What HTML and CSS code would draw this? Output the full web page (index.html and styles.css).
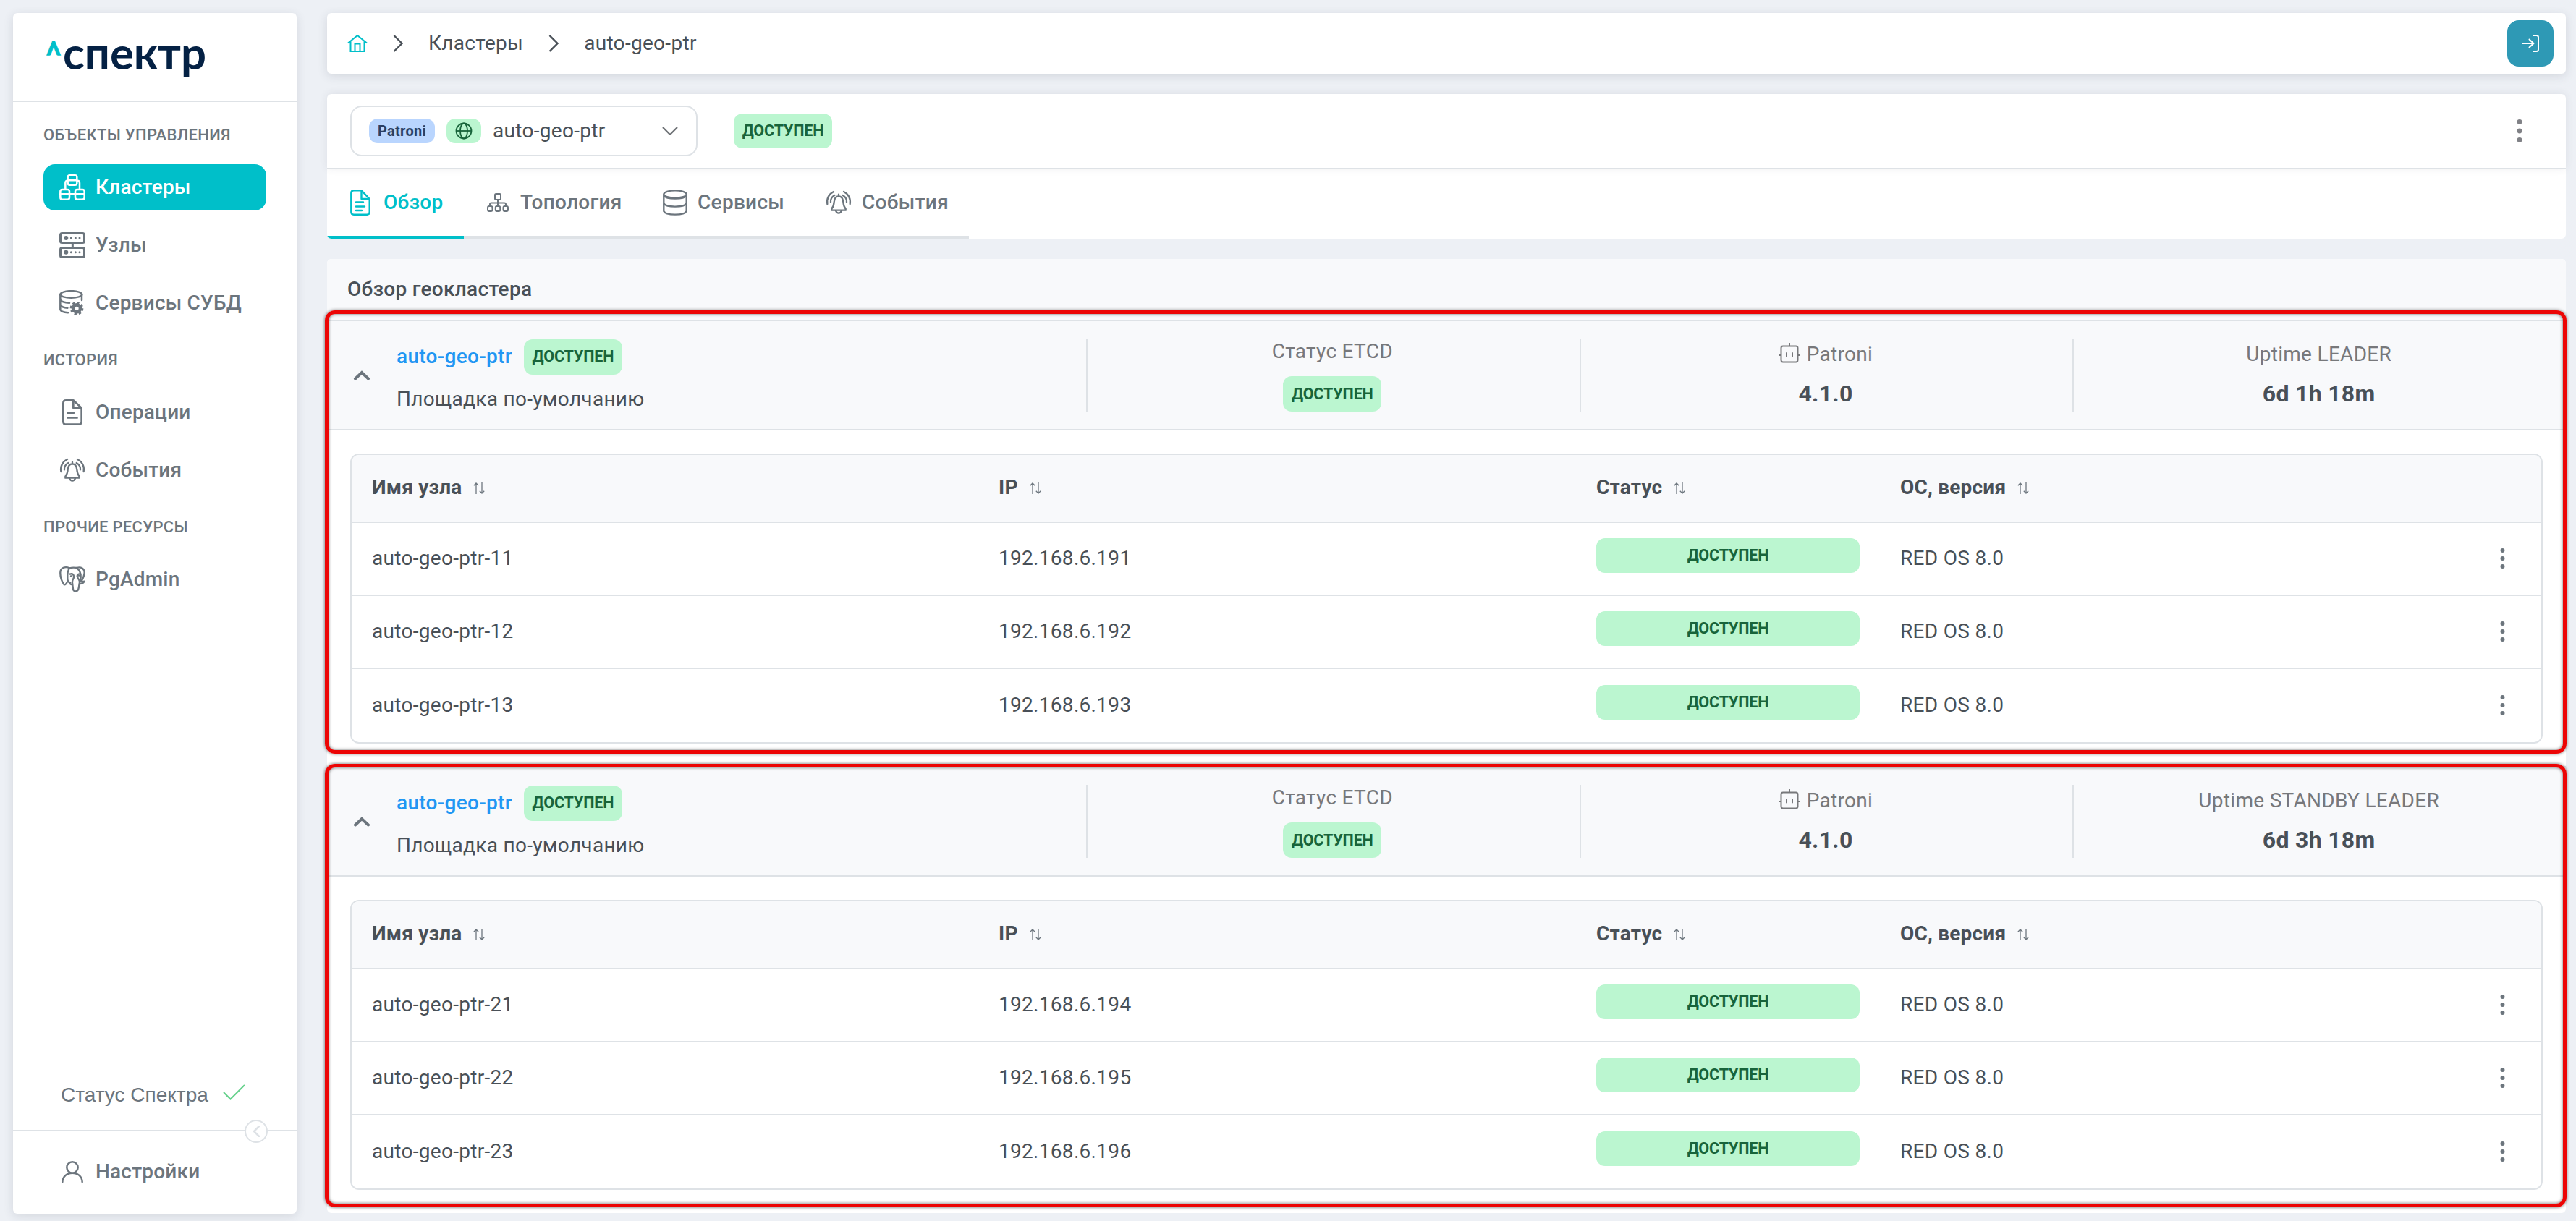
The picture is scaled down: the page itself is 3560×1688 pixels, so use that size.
FILE: index.html
```
<!DOCTYPE html>
<html lang="ru">
<head>
  <meta charset="utf-8">
  <title>Спектр - auto-geo-ptr</title>
  <link rel="stylesheet" href="styles.css">
</head>
<body>
  <!-- Icon sprite -->
  <svg class="sprite" width="0" height="0">
    <defs>
      <symbol id="i-cluster" viewBox="0 0 108 108">
        <g fill="none" stroke="currentColor" stroke-width="7.5" stroke-linecap="round">
          <rect x="35" y="4" width="38" height="40" rx="8" />
          <path d="M35 25H73M4 82H42M66 82H104M46 82H62M25 60V36Q25 26 33 26M84 60V36Q84 26 76 26" />
          <rect x="4" y="63" width="38" height="41" rx="8" />
          <rect x="66" y="63" width="38" height="41" rx="8" />
        </g>
      </symbol>
      <symbol id="i-nodes" viewBox="0 0 108 108">
        <g fill="none" stroke="currentColor" stroke-width="9">
          <rect x="4.500" y="4.500" width="99" height="39" rx="7" />
          <rect x="4.500" y="64.500" width="99" height="39" rx="7" />
          <path d="M55 46V62" />
        </g>
        <g fill="currentColor">
          <circle cx="28" cy="24" r="9" /><circle cx="49" cy="24" r="4.500" /><circle cx="67" cy="24" r="4.500" /><circle cx="84" cy="24" r="4.500" />
          <circle cx="28" cy="83" r="9" /><circle cx="49" cy="83" r="4.500" /><circle cx="67" cy="83" r="4.500" /><circle cx="84" cy="83" r="4.500" />
        </g>
      </symbol>
      <symbol id="i-dbgear" viewBox="0 0 108 108">
        <g fill="none" stroke="currentColor" stroke-width="7.500" stroke-linecap="round">
          <ellipse cx="49" cy="18" rx="45" ry="14.500" />
          <path d="M4 18V82Q8 92 36 94M93 18V42M4 40Q10 51 42 53M4 62Q10 73 34 74" />
        </g>
        <circle cx="72" cy="76" r="15" fill="none" stroke="currentColor" stroke-width="14" />
        <circle cx="72" cy="76" r="24" fill="none" stroke="currentColor" stroke-width="8" stroke-dasharray="10 8.850" />
      </symbol>
      <symbol id="i-doc" viewBox="0 0 108 108">
        <g fill="none" stroke="currentColor" stroke-width="8" stroke-linecap="round" stroke-linejoin="round">
          <path d="M58 4H28Q16 4 16 16V92Q16 104 28 104H80Q92 104 92 92V36ZM58 4V36H92" />
          <path d="M34 57H60M34 77H74" stroke-width="7" />
        </g>
      </symbol>
      <symbol id="i-bell" viewBox="0 0 108 108">
        <g fill="none" stroke="currentColor" stroke-width="7" stroke-linecap="round" stroke-linejoin="round">
          <path d="M54 28C40 28 36 40 35 52C34 66 30 74 25 80V86H83V80C78 74 74 66 73 52C72 40 68 28 54 28Z" />
          <path d="M54 28V20M42 88Q46 98 54 98Q62 98 66 88" />
          <path d="M7 60C3 38 14 18 33 9M101 60C105 38 94 18 75 9M21 52C20 40 26 30 37 24M87 52C88 40 82 30 71 24" />
        </g>
      </symbol>
      <symbol id="i-elephant" viewBox="0 0 108 108">
        <g fill="none" stroke="currentColor" stroke-width="7" stroke-linecap="round" stroke-linejoin="round">
          <path d="M42 7C24 -1 5 6 4 24C3 42 10 62 20 76C25 78 30 70 34 62" />
          <path d="M42 7C56 3 60 4 72 6C90 0 104 10 104 26C103 42 96 54 91 62" />
          <path d="M42 8C32 20 34 34 34 48C33 60 38 66 46 68M72 6C84 16 90 28 89 44C88 56 89 60 91 62Q98 64 104 62Q98 72 86 72" />
          <path d="M44 32C54 28 62 34 60 46C58 54 52 58 54 68L57 94C59 106 76 106 79 94C82 82 82 74 84 66C86 56 74 50 74 40C74 32 82 30 88 32" />
          <path d="M44 72Q50 78 54 72M48 40H51M79 38H82" />
        </g>
      </symbol>
      <symbol id="i-user" viewBox="0 0 108 108">
        <g fill="none" stroke="currentColor" stroke-width="7.500" stroke-linecap="round">
          <circle cx="54" cy="36" r="23" />
          <path d="M13 96C14 72 32 59 54 59C76 59 94 72 95 96" />
        </g>
      </symbol>
      <symbol id="i-check" viewBox="0 0 31 22">
        <path d="M1 11L10.500 20.500L30 1" fill="none" stroke="currentColor" stroke-width="2" />
      </symbol>
      <symbol id="i-home" viewBox="0 0 28 24">
        <path d="M1 11.500L14 1L27 11.500M4.500 9V23H23.500V9M10.500 23V12.500H17.500V23" fill="none" stroke="currentColor" stroke-width="2" />
      </symbol>
      <symbol id="i-next" viewBox="0 0 14 24">
        <path d="M1.500 1L12.500 12L1.500 23" fill="none" stroke="currentColor" stroke-width="2.400" />
      </symbol>
      <symbol id="i-exit" viewBox="0 0 24 24">
        <path d="M1 12H16M10.500 6.500L16.500 12L10.500 17.500M16 1H20.500Q23 1 23 3.500V20.500Q23 23 20.500 23H16" fill="none" stroke="currentColor" stroke-width="2" stroke-linecap="round" stroke-linejoin="round" />
      </symbol>
      <symbol id="i-globe" viewBox="0 0 24 24">
        <g fill="none" stroke="currentColor" stroke-width="1.800">
          <circle cx="12" cy="12" r="10.500" />
          <ellipse cx="12" cy="12" rx="5" ry="10.500" />
          <path d="M1.500 12H22.500" />
        </g>
      </symbol>
      <symbol id="i-down" viewBox="0 0 22 12">
        <path d="M1 1L11 11L21 1" fill="none" stroke="currentColor" stroke-width="2.200" />
      </symbol>
      <symbol id="i-kebab" viewBox="0 0 8 32">
        <g fill="currentColor">
          <circle cx="4" cy="3.500" r="3.400" /><circle cx="4" cy="16" r="3.400" /><circle cx="4" cy="28.500" r="3.400" />
        </g>
      </symbol>
      <symbol id="i-overview" viewBox="0 0 28 36">
        <g fill="none" stroke="currentColor" stroke-width="2.400" stroke-linecap="round" stroke-linejoin="round">
          <path d="M15.500 1.300H5Q1.300 1.300 1.300 5V31Q1.300 34.700 5 34.700H23Q26.700 34.700 26.700 31V13ZM15.500 1.300V13H26.700" />
          <path d="M8 17.500H18M8 23.500H20M8 29H16" />
        </g>
      </symbol>
      <symbol id="i-topology" viewBox="0 0 30 26">
        <g fill="none" stroke="currentColor" stroke-width="2">
          <rect x="11" y="1" width="8" height="8" rx="1.500" />
          <rect x="1" y="18" width="6.500" height="7" rx="2" />
          <rect x="11.750" y="18" width="6.500" height="7" rx="2" />
          <rect x="22.500" y="18" width="6.500" height="7" rx="2" />
          <path d="M15 9V18M4 18V15.500Q4 13.500 6 13.500H24Q26 13.500 26 15.500V18" />
        </g>
      </symbol>
      <symbol id="i-db" viewBox="0 0 34 36">
        <g fill="none" stroke="currentColor" stroke-width="2.400">
          <path d="M1.300 6.500V30C4 36.200 30 36.200 32.700 30V6.500" />
          <ellipse cx="17" cy="6.500" rx="15.700" ry="5.200" />
          <path d="M1.300 8.500C5 14 29 14 32.700 8.500M1.300 19.500C5 25 29 25 32.700 19.500" />
        </g>
      </symbol>
      <symbol id="i-up" viewBox="0 0 24 14">
        <path d="M3 11.500L12 3L21 11.500" fill="none" stroke="currentColor" stroke-width="4" stroke-linecap="round" />
      </symbol>
      <symbol id="i-sort" viewBox="0 0 16 16">
        <path d="M4 16V1.200M.8 4.200L4 1L7.200 4.200M12 0V14.800M8.800 11.800L12 15L15.200 11.800" fill="none" stroke="currentColor" stroke-width="1.300" />
      </symbol>
      <symbol id="i-bot" viewBox="0 0 30 28">
        <path d="M6 4.500H24Q26.500 4.500 26.500 7V23.500Q26.500 26.500 24 26.500H6Q3.500 26.500 3.500 23.500V7Q3.500 4.500 6 4.500ZM15 .5V4.500M.5 17H3.500M26.500 17H29.500M11 14V18.500M19 14V18.500" fill="none" stroke="currentColor" stroke-width="2" stroke-linecap="round" />
      </symbol>
    </defs>
  </svg>

  <div class="app">
    <aside class="sidebar">
      <div class="logo">
        <svg width="240" height="104" viewBox="0 0 240 104">
          <text class="logo-mark" x="1" y="74" textLength="22" lengthAdjust="spacingAndGlyphs">^</text>
          <text class="logo-text" x="25" y="78" textLength="198" lengthAdjust="spacingAndGlyphs">спектр</text>
        </svg>
      </div>
      <nav class="menu">
        <div class="menu-label">ОБЪЕКТЫ УПРАВЛЕНИЯ</div>
        <a class="menu-item active"><svg class="icon"><use href="#i-cluster" /></svg>Кластеры</a>
        <a class="menu-item"><svg class="icon"><use href="#i-nodes" /></svg>Узлы</a>
        <a class="menu-item"><svg class="icon"><use href="#i-dbgear" /></svg>Сервисы СУБД</a>
        <div class="menu-label">ИСТОРИЯ</div>
        <a class="menu-item"><svg class="icon"><use href="#i-doc" /></svg>Операции</a>
        <a class="menu-item"><svg class="icon"><use href="#i-bell" /></svg>События</a>
        <div class="menu-label">ПРОЧИЕ РЕСУРСЫ</div>
        <a class="menu-item"><svg class="icon"><use href="#i-elephant" /></svg>PgAdmin</a>
      </nav>
      <div class="app-status">Статус Спектра <svg class="check"><use href="#i-check" /></svg></div>
      <div class="sidebar-footer">
        <a class="menu-item"><svg class="icon"><use href="#i-user" /></svg>Настройки</a>
        <span class="collapse">
          <svg width="10" height="16" viewBox="0 0 10 16"><path d="M9 1L2 8L9 15" fill="none" stroke="currentColor" stroke-width="2.500" stroke-linecap="round" /></svg>
        </span>
      </div>
    </aside>

    <main class="content">
      <header class="topbar">
        <svg class="home"><use href="#i-home" /></svg>
        <svg class="next"><use href="#i-next" /></svg>
        <span>Кластеры</span>
        <svg class="next"><use href="#i-next" /></svg>
        <span>auto-geo-ptr</span>
        <button class="exit"><svg><use href="#i-exit" /></svg></button>
      </header>

      <section class="cluster">
        <div class="cluster-head">
          <div class="select">
            <span class="tag blue">Patroni</span>
            <span class="tag green"><svg><use href="#i-globe" /></svg></span>
            <span class="select-value">auto-geo-ptr</span>
            <svg class="down"><use href="#i-down" /></svg>
          </div>
          <span class="badge">ДОСТУПЕН</span>
          <svg class="kebab"><use href="#i-kebab" /></svg>
        </div>
        <div class="tabs">
          <a class="tab active"><svg width="28" height="36"><use href="#i-overview" /></svg>Обзор</a>
          <a class="tab"><svg width="30" height="26"><use href="#i-topology" /></svg>Топология</a>
          <a class="tab"><svg width="34" height="36"><use href="#i-db" /></svg>Сервисы</a>
          <a class="tab"><svg width="36" height="36"><use href="#i-bell" /></svg>События</a>
        </div>
      </section>

      <section class="overview">
        <h2>Обзор геокластера</h2>

        <div class="site">
          <div class="site-head">
            <div class="site-name">
              <svg class="toggle"><use href="#i-up" /></svg>
              <div>
                <div class="site-title"><a>auto-geo-ptr</a><span class="badge">ДОСТУПЕН</span></div>
                <div class="site-sub">Площадка по-умолчанию</div>
              </div>
            </div>
            <div class="stat etcd"><div class="stat-label">Статус ETCD</div><span class="badge">ДОСТУПЕН</span></div>
            <div class="stat"><div class="stat-label"><svg class="bot"><use href="#i-bot" /></svg>Patroni</div><div class="stat-value">4.1.0</div></div>
            <div class="stat"><div class="stat-label">Uptime LEADER</div><div class="stat-value">6d 1h 18m</div></div>
          </div>
          <table>
            <thead>
              <tr>
                <th class="c-name">Имя узла<svg class="sort"><use href="#i-sort" /></svg></th>
                <th class="c-ip">IP<svg class="sort"><use href="#i-sort" /></svg></th>
                <th class="c-status">Статус<svg class="sort"><use href="#i-sort" /></svg></th>
                <th>ОС, версия<svg class="sort"><use href="#i-sort" /></svg></th>
                <th class="c-menu"></th>
              </tr>
            </thead>
            <tbody>
              <tr><td>auto-geo-ptr-11</td><td>192.168.6.191</td><td><span class="badge wide">ДОСТУПЕН</span></td><td>RED OS 8.0</td><td><svg class="kebab"><use href="#i-kebab" /></svg></td></tr>
              <tr><td>auto-geo-ptr-12</td><td>192.168.6.192</td><td><span class="badge wide">ДОСТУПЕН</span></td><td>RED OS 8.0</td><td><svg class="kebab"><use href="#i-kebab" /></svg></td></tr>
              <tr><td>auto-geo-ptr-13</td><td>192.168.6.193</td><td><span class="badge wide">ДОСТУПЕН</span></td><td>RED OS 8.0</td><td><svg class="kebab"><use href="#i-kebab" /></svg></td></tr>
            </tbody>
          </table>
          <div class="marker"></div>
        </div>

        <div class="site">
          <div class="site-head">
            <div class="site-name">
              <svg class="toggle"><use href="#i-up" /></svg>
              <div>
                <div class="site-title"><a>auto-geo-ptr</a><span class="badge">ДОСТУПЕН</span></div>
                <div class="site-sub">Площадка по-умолчанию</div>
              </div>
            </div>
            <div class="stat etcd"><div class="stat-label">Статус ETCD</div><span class="badge">ДОСТУПЕН</span></div>
            <div class="stat"><div class="stat-label"><svg class="bot"><use href="#i-bot" /></svg>Patroni</div><div class="stat-value">4.1.0</div></div>
            <div class="stat"><div class="stat-label">Uptime STANDBY LEADER</div><div class="stat-value">6d 3h 18m</div></div>
          </div>
          <table>
            <thead>
              <tr>
                <th class="c-name">Имя узла<svg class="sort"><use href="#i-sort" /></svg></th>
                <th class="c-ip">IP<svg class="sort"><use href="#i-sort" /></svg></th>
                <th class="c-status">Статус<svg class="sort"><use href="#i-sort" /></svg></th>
                <th>ОС, версия<svg class="sort"><use href="#i-sort" /></svg></th>
                <th class="c-menu"></th>
              </tr>
            </thead>
            <tbody>
              <tr><td>auto-geo-ptr-21</td><td>192.168.6.194</td><td><span class="badge wide">ДОСТУПЕН</span></td><td>RED OS 8.0</td><td><svg class="kebab"><use href="#i-kebab" /></svg></td></tr>
              <tr><td>auto-geo-ptr-22</td><td>192.168.6.195</td><td><span class="badge wide">ДОСТУПЕН</span></td><td>RED OS 8.0</td><td><svg class="kebab"><use href="#i-kebab" /></svg></td></tr>
              <tr><td>auto-geo-ptr-23</td><td>192.168.6.196</td><td><span class="badge wide">ДОСТУПЕН</span></td><td>RED OS 8.0</td><td><svg class="kebab"><use href="#i-kebab" /></svg></td></tr>
            </tbody>
          </table>
          <div class="marker second"></div>
        </div>
      </section>
    </main>
  </div>
</body>
</html>
```
FILE: styles.css
```
* {
  box-sizing: border-box;
}
body {
  margin: 0;
  background: #edf0f5;
  color: #495057;
  font-family: Roboto, "Liberation Sans", sans-serif;
  font-size: 28px;
  letter-spacing: 0.3px;
  overflow: hidden;
}
svg {
  display: block;
  flex: none;
}
.sprite {
  position: absolute;
}
.app {
  display: flex;
  gap: 42px;
  height: 1688px;
  padding: 18px 14px 10px 18px;
}

/* Sidebar */
.sidebar {
  display: flex;
  flex-direction: column;
  width: 392px;
  height: 1660px;
  background: #fff;
  border-radius: 6px;
  box-shadow: 0 3px 14px rgba(50, 60, 80, 0.14);
  color: #6c757d;
}
.logo {
  height: 123px;
  padding-left: 44px;
  border-bottom: 2px solid #dee2e6;
}
.logo-mark {
  fill: #00bfc9;
  stroke: #00bfc9;
  stroke-width: 1.5px;
  font: 700 48px Lato, sans-serif;
  letter-spacing: 0;
}
.logo-text {
  fill: #042144;
  font: 700 62px Lato, sans-serif;
  letter-spacing: 0;
}
.menu {
  padding: 33px 42px 0;
}
.menu-label {
  margin: 34px 0 27px;
  font-size: 22px;
  font-weight: 500;
  line-height: 26px;
}
.menu-label:first-child {
  margin-top: 0;
}
.menu-item {
  display: flex;
  align-items: center;
  gap: 14px;
  height: 64px;
  padding: 0 0 2px 22px;
  border-radius: 16px;
  font-weight: 500;
  letter-spacing: 0.2px;
}
.menu-item + .menu-item {
  margin-top: 16px;
}
.menu-item.active {
  background: #00bfc9;
  color: #fff;
}
.icon {
  width: 36px;
  height: 36px;
  margin-top: 2px;
}
.app-status {
  display: flex;
  align-items: center;
  gap: 20px;
  margin-top: auto;
  padding: 0 0 28px 66px;
  font-family: "Liberation Sans", sans-serif;
  line-height: 40px;
  letter-spacing: 0;
}
.check {
  width: 31px;
  height: 22px;
  margin-bottom: 8px;
  color: #66d18c;
}
.sidebar-footer {
  position: relative;
  height: 116px;
  padding: 24px 42px;
  border-top: 2px solid #dee2e6;
}
.collapse {
  position: absolute;
  top: -16px;
  left: 320px;
  display: flex;
  align-items: center;
  justify-content: center;
  width: 32px;
  height: 32px;
  background: #fff;
  border: 2px solid #dee2e6;
  border-radius: 50%;
  color: #dee2e6;
}

/* Main column */
.content {
  flex: 1;
  min-width: 0;
}
.topbar {
  display: flex;
  align-items: center;
  gap: 35px;
  height: 84px;
  padding: 0 17px 0 28px;
  background: #fff;
  border-radius: 6px;
  box-shadow: 0 3px 14px rgba(50, 60, 80, 0.14);
}
.topbar span {
  margin-bottom: 2px;
}
.home {
  width: 28px;
  height: 24px;
  color: #00bfc9;
}
.next {
  width: 14px;
  height: 24px;
}
.exit {
  display: flex;
  align-items: center;
  justify-content: center;
  width: 64px;
  height: 64px;
  margin-left: auto;
  padding: 0;
  background: #2e99b5;
  border: 0;
  border-radius: 16px;
  color: #fff;
}
.exit svg {
  width: 24px;
  height: 24px;
}

.cluster {
  margin-top: 28px;
  background: #fff;
  border-radius: 6px;
}
.cluster-head {
  display: flex;
  align-items: center;
  height: 104px;
  padding: 0 60px 0 32px;
  border-bottom: 2px solid #dee2e6;
  border-radius: 6px 6px 0 0;
  box-shadow: 0 -1px 12px rgba(50, 60, 80, 0.09);
}
.cluster-head .kebab {
  margin-left: auto;
  color: #808186;
}
.select {
  display: flex;
  align-items: center;
  gap: 16px;
  width: 480px;
  height: 70px;
  margin-right: 50px;
  padding: 0 25px 0 24px;
  border: 2px solid #dee2e6;
  border-radius: 16px;
}
.select-value {
  margin-bottom: 2px;
}
.down {
  width: 22px;
  height: 12px;
  margin-left: auto;
  color: #6f7377;
}
.tag {
  display: flex;
  align-items: center;
  justify-content: center;
  height: 34px;
  border-radius: 12px;
}
.tag.blue {
  width: 91px;
  background: #b9d5fe;
  color: #2a3f63;
  font-size: 20px;
  font-weight: 700;
}
.tag.green {
  width: 48px;
  background: #bbf6d0;
  color: #18643a;
}
.tag svg {
  width: 24px;
  height: 24px;
}
.badge {
  display: flex;
  align-items: center;
  justify-content: center;
  width: 136px;
  height: 48px;
  padding-bottom: 1px;
  background: #bbf6d0;
  border-radius: 12px;
  color: #18643a;
  font-size: 21.6px;
  font-weight: 700;
  letter-spacing: -0.2px;
}
.badge.wide {
  width: auto;
  margin-bottom: 8px;
}
.kebab {
  width: 8px;
  height: 32px;
}

.tabs {
  display: flex;
  height: 96px;
  overflow: hidden;
  border-radius: 0 0 0 6px;
}
.tab {
  display: flex;
  align-items: center;
  gap: 16px;
  width: 226px;
  padding: 0 0 2px 32px;
  border-bottom: 4px solid #dee2e6;
  color: #6c757d;
  font-weight: 500;
}
.tab svg {
  margin-top: 2px;
}
.tab:nth-child(1) {
  width: 189px;
  gap: 18px;
}
.tab:nth-child(2) {
  width: 244px;
}
.tab:nth-child(3) {
  padding-left: 31px;
  gap: 14px;
}
.tab:nth-child(4) {
  width: 228px;
  padding-left: 30px;
  gap: 14px;
}
.tab.active {
  border-color: #00bfc9;
  color: #00bfc9;
}

/* Geo cluster overview */
.overview {
  margin-top: 28px;
  padding-bottom: 1px;
  background: #fff;
  border-radius: 6px;
}
.overview h2 {
  height: 84px;
  margin: 0;
  padding-left: 28px;
  background: #f8f9fb;
  border-radius: 6px 6px 0 0;
  font-size: 28px;
  font-weight: 500;
  line-height: 83px;
}
.site {
  position: relative;
  height: 617px;
}
.site-head {
  display: flex;
  height: 153px;
  padding: 24px 0;
  background: #f8f9fb;
  border: solid #dee2e6;
  border-width: 2px 0;
}
.site-name {
  display: flex;
  align-items: center;
  gap: 36px;
  width: 1049px;
  padding-left: 36px;
}
.toggle {
  width: 24px;
  height: 14px;
  color: #6c757d;
}
.site-title {
  display: flex;
  align-items: center;
  gap: 16px;
  line-height: 47px;
}
.site-title a {
  margin-bottom: 2px;
  color: #2196f3;
  font-weight: 500;
}
.site-title .badge,
.stat .badge {
  height: 49px;
}
.site-sub {
  margin-top: 16px;
  line-height: 35px;
}
.stat {
  display: flex;
  flex: 1;
  flex-direction: column;
  align-items: center;
  gap: 14px;
  padding-right: 3px;
  border-left: 2px solid #dee2e6;
}
.stat.etcd {
  gap: 18px;
}
.stat-label {
  display: flex;
  align-items: center;
  gap: 9px;
  height: 43px;
  color: #77787b;
}
.etcd .stat-label {
  height: 34px;
}
.bot {
  width: 30px;
  height: 28px;
  margin-bottom: 3px;
}
.stat-value {
  font-size: 32px;
  font-weight: 700;
  line-height: 38px;
}

table {
  width: 3030px;
  margin: 32px 0 0 32px;
  border: 2px solid #dee2e6;
  border-radius: 12px;
  border-spacing: 0;
  table-layout: fixed;
  overflow: hidden;
}
th,
td {
  height: 101px;
  padding: 0 28px 2px;
  border-bottom: 2px solid #dee2e6;
  text-align: left;
}
th {
  height: 94px;
  padding-bottom: 3px;
  background: #f8f9fb;
  font-weight: 700;
  letter-spacing: 0.2px;
}
tbody tr:last-child td {
  border-bottom: 0;
}
.c-name {
  width: 866px;
}
.c-ip {
  width: 826px;
}
.c-status {
  width: 420px;
}
.c-menu {
  width: 85px;
}
.sort {
  display: inline-block;
  width: 16px;
  height: 16px;
  margin-left: 16px;
  color: #6c757d;
}
td .kebab {
  width: 7px;
  height: 28px;
  color: #6c757d;
}

/* Red outline around each site */
.marker {
  position: absolute;
  top: -13px;
  left: -3px;
  width: 3098px;
  height: 613px;
  border: 5px solid #ec0505;
  border-radius: 14px;
  box-shadow: 0 0 4px rgba(0, 0, 0, 0.6), inset 0 0 4px rgba(0, 0, 0, 0.6);
  pointer-events: none;
}
.marker.second {
  top: -3px;
}
```
